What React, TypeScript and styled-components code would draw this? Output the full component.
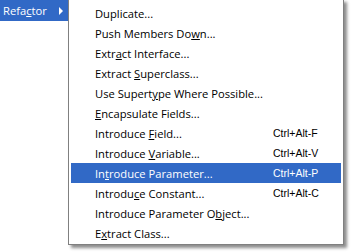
import React from 'react'
import styled, { createGlobalStyle } from 'styled-components'

const Global = createGlobalStyle`
  html, body {
    margin: 0;
    padding: 0;
    background: #ffffff;
  }
  body {
    font-family: 'Open Sans', 'Noto Sans', sans-serif;
    overflow: hidden;
  }
`

const Page = styled.div`
  display: flex;
  align-items: flex-start;
  width: 351px;
  height: 252px;
`

const ParentItem = styled.div`
  display: flex;
  align-items: center;
  justify-content: space-between;
  width: 68px;
  height: 21px;
  box-sizing: border-box;
  padding: 0 5px 0 3px;
  background: #3169c6;
  color: #ffffff;
  font-size: 11.2px;
`

const Arrow = styled.span`
  width: 0;
  height: 0;
  border-top: 4px solid transparent;
  border-bottom: 4px solid transparent;
  border-left: 4px solid #ffffff;
`

const Menu = styled.ul`
  list-style: none;
  margin: -1px 0 0 0;
  padding: 3px 2px 1px 2px;
  width: 276px;
  box-sizing: border-box;
  background: #ffffff;
  border: 1px solid #808080;
  box-shadow: 3px 3px 3px rgba(0, 0, 0, 0.45);
`

const Item = styled.li<{ $active?: boolean }>`
  display: flex;
  align-items: center;
  height: 20px;
  padding-left: 24px;
  font-size: 11.2px;
  color: ${(p) => (p.$active ? '#ffffff' : '#000000')};
  background: ${(p) => (p.$active ? '#3169c6' : 'transparent')};
`

const Label = styled.span`
  flex: 1;
  white-space: nowrap;
`

const Shortcut = styled.span`
  width: 68px;
  font-family: 'Liberation Sans', Arial, sans-serif;
  font-size: 10.5px;
`

const Key = styled.span`
  text-decoration: underline;
  text-underline-offset: 1px;
`

type Entry = { pre: string; key?: string; post?: string; shortcut?: string; active?: boolean }

const entries: Entry[] = [
  { pre: 'Duplicate...' },
  { pre: 'Push Members Do', key: 'w', post: 'n...' },
  { pre: 'Extr', key: 'a', post: 'ct Interface...' },
  { pre: 'Extract ', key: 'S', post: 'uperclass...' },
  { pre: 'Use Supert', key: 'y', post: 'pe Where Possible...' },
  { pre: '', key: 'E', post: 'ncapsulate Fields...' },
  { pre: 'Introduce ', key: 'F', post: 'ield...', shortcut: 'Ctrl+Alt-F' },
  { pre: 'Introduce ', key: 'V', post: 'ariable...', shortcut: 'Ctrl+Alt-V' },
  { pre: 'In', key: 't', post: 'roduce Parameter...', shortcut: 'Ctrl+Alt-P', active: true },
  { pre: 'Introdu', key: 'c', post: 'e Constant...', shortcut: 'Ctrl+Alt-C' },
  { pre: 'Introduce Parameter O', key: 'b', post: 'ject...' },
  { pre: 'E', key: 'x', post: 'tract Class...' },
]

const App: React.FC = () => {
  return (
    <Page>
      <Global />
      <ParentItem>
        <span>
          Refa<Key>c</Key>tor
        </span>
        <Arrow />
      </ParentItem>
      <Menu>
        {entries.map((e, i) => (
          <Item key={i} $active={e.active}>
            <Label>
              {e.pre}
              {e.key && <Key>{e.key}</Key>}
              {e.post}
            </Label>
            {e.shortcut && <Shortcut>{e.shortcut}</Shortcut>}
          </Item>
        ))}
      </Menu>
    </Page>
  )
}

export default App
